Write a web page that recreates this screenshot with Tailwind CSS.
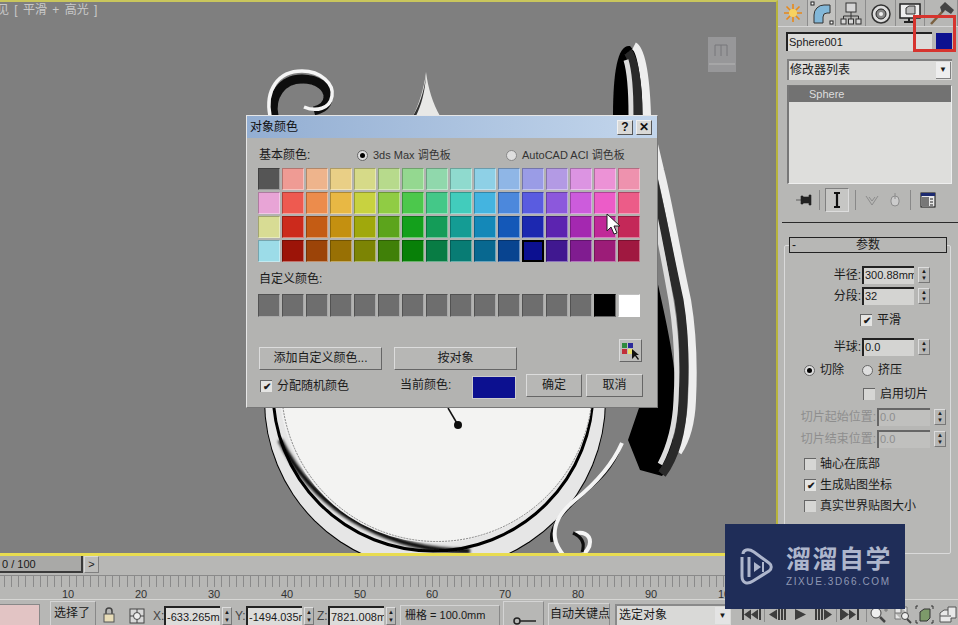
<!DOCTYPE html>
<html><head><meta charset="utf-8"><script src="https://cdn.jsdelivr.net/npm/@tailwindcss/browser@4"></script></head>
<body class="w-[958px] h-[625px] overflow-hidden bg-[#b7b7b5] text-[#1a1a1a] text-[12px] font-['Liberation_Sans','Noto_Sans_CJK_SC',sans-serif]">
<div class="relative flex w-[958px] h-[625px]">
  <div class="flex flex-col w-[778px] h-[625px]">
    <!-- viewport -->
    <div class="relative h-[556px] bg-[#7f7f7f] border-t-2 border-r-2 border-b-3 border-t-[#c9c65c] border-r-[#b8b43c] border-b-[#e8dc50] overflow-hidden">
      <div class="absolute -left-[3px] top-0 text-[12px] leading-[16px] text-[#c9c9c9] whitespace-pre [word-spacing:2px]">见 [ 平滑 + 高光 ]</div>
      <svg class="absolute left-0 top-[-2px]" width="776" height="556" viewBox="0 0 776 556">
        <defs><filter id="b"><feGaussianBlur stdDeviation="0.7"/></filter><filter id="c"><feGaussianBlur stdDeviation="1.5"/></filter></defs>
        <g filter="url(#b)">
          <!-- viewcube -->
          <rect x="708" y="37" width="28" height="35" fill="#979799"/>
          <path d="M715 56V45h6v11M721 45h6v11" stroke="#77777a" fill="none"/><path d="M709 64h26" stroke="#b5b5b5"/>
          <!-- spiral -->
          <path d="M274 116C270 96 282 79 302 79C318 79 328 87 328 97C328 105 322 109 314 111" fill="none" stroke="#0d0d0d" stroke-width="9"/>
          <path d="M270 116C265 90 278 71 302 71C321 71 334 84 332 96C330 109 316 112 304 107" fill="none" stroke="#f5f5f5" stroke-width="3.5"/>
          <!-- cone -->
          <path d="M426 72C424 90 418 106 413 116H440C433 104 428 88 426 72Z" fill="#e8e8e6"/>
          <path d="M426 76C424 92 419 106 413 116H416C421 106 425 92 426 76Z" fill="#333"/>
          <!-- right ornament -->
          <path d="M630 46C618 44 613 70 613 116H642V60Z" fill="#000"/>
          <path d="M657 280C668 330 680 380 675 420C672 450 672 465 662 476L640 470L628 440L640 405Z" fill="#000"/>
          <path d="M634 46C642 50 646 85 647 115L660 170C668 200 676 250 687 300C692 330 694 360 692 400C691 425 686 440 678 452" fill="none" stroke="#eeeeee" stroke-width="8"/>
          <path d="M628 52C634 60 638 85 638 115L651 170C660 205 669 255 679 300C684 330 685 365 683 400C682 430 676 455 662 474" fill="none" stroke="#2a2a2a" stroke-width="9"/>
          <path d="M626 60C629 70 631 90 631 115L645 170C653 205 663 255 671 300C676 330 678 365 676 400C675 425 670 445 660 464" fill="none" stroke="#dddddd" stroke-width="5"/>
          <!-- clock -->
          <circle cx="435" cy="400" r="171" fill="#000"/>
          <circle cx="435" cy="400" r="170" fill="#e6e6e6"/>
          <circle cx="433" cy="391" r="160" fill="none" stroke="#000" stroke-width="3" filter="url(#b)"/>
          <path d="M280 440C320 520 400 552 470 551" fill="none" stroke="#000" stroke-width="5" filter="url(#c)"/>
          <circle cx="436" cy="386" r="157" fill="#efefef"/>
          <circle cx="437" cy="386" r="155.500" fill="#f3f3f2" stroke="#444" stroke-width="0.6" stroke-dasharray="2 1"/>
          <path d="M448 408L458 425" stroke="#111" stroke-width="1.5"/><circle cx="458" cy="425" r="4" fill="#111"/>
          <!-- bottom curl -->
          <path d="M620 447C610 475 588 488 572 504C558 518 549 530 552 542" fill="none" stroke="#0a0a0a" stroke-width="3"/>
          <path d="M622 443C610 470 590 488 575 500C560 512 553 525 555 538C556 546 560 551 564 556" fill="none" stroke="#f4f4f4" stroke-width="4"/>
          <path d="M574 534C582 531 590 534 590 542C590 548 586 552 582 556" fill="none" stroke="#f4f4f4" stroke-width="4"/>
          <path d="M573 533C580 536 586 541 582 552" fill="none" stroke="#0a0a0a" stroke-width="3"/>
        </g>
      </svg>
    </div>
    <!-- timeline -->
    <div class="flex items-start h-[17px] pt-0">
      <div class="w-[83px] h-[17px] bg-[#a9a9a7] border-r-2 border-b-2 border-[#3a3a3a] pl-[2px] text-[11px] leading-[16px]">0 / 100</div>
      <div class="w-[15px] h-[17px] ml-[1px] bg-[#bdbdbb] border border-[#d8d8d8] border-b-[#808080] border-r-[#808080] text-center text-[11px] leading-[15px]">&gt;</div>
    </div>
    <div class="h-[26px] relative">
      <svg width="778" height="26" class="absolute left-0 top-0">
        <path d="M0 2.500H778" stroke="#8a8a8a"/>
        <path stroke="#8a8a8a" d="M4.500 2v12M11.500 2v12M18.500 2v12M25.500 2v12M33.500 2v12M40.500 2v12M47.500 2v12M54.500 2v12M61.500 2v12M69.500 2v12M76.500 2v12M83.500 2v12M90.500 2v12M98.500 2v12M105.500 2v12M112.500 2v12M119.500 2v12M127.500 2v12M134.500 2v12M141.500 2v12M149.500 2v12M156.500 2v12M163.500 2v12M170.500 2v12M178.500 2v12M185.500 2v12M192.500 2v12M199.500 2v12M207.500 2v12M214.500 2v12M221.500 2v12M229.500 2v12M236.500 2v12M243.500 2v12M250.500 2v12M258.500 2v12M265.500 2v12M272.500 2v12M279.500 2v12M287.500 2v12M294.500 2v12M301.500 2v12M309.500 2v12M316.500 2v12M323.500 2v12M330.500 2v12M338.500 2v12M345.500 2v12M352.500 2v12M359.500 2v12M367.500 2v12M374.500 2v12M381.500 2v12M389.500 2v12M396.500 2v12M403.500 2v12M410.500 2v12M418.500 2v12M425.500 2v12M432.500 2v12M439.500 2v12M447.500 2v12M454.500 2v12M461.500 2v12M469.500 2v12M476.500 2v12M483.500 2v12M490.500 2v12M498.500 2v12M505.500 2v12M512.500 2v12M519.500 2v12M527.500 2v12M534.500 2v12M541.500 2v12M549.500 2v12M556.500 2v12M563.500 2v12M570.500 2v12M578.500 2v12M585.500 2v12M592.500 2v12M599.500 2v12M607.500 2v12M614.500 2v12M621.500 2v12M629.500 2v12M636.500 2v12M643.500 2v12M650.500 2v12M658.500 2v12M665.500 2v12M672.500 2v12M679.500 2v12M687.500 2v12M694.500 2v12M701.500 2v12M709.500 2v12M716.500 2v12M723.500 2v12M730.500 2v12"/>
      </svg>
      <div class="absolute left-0 top-[14px] w-[778px] flex pl-[62px] text-[11px] leading-[14px] text-[#333]">
        <span class="w-[73px]">10</span><span class="w-[73px]">20</span><span class="w-[73px]">30</span><span class="w-[73px]">40</span><span class="w-[72px]">50</span><span class="w-[73px]">60</span><span class="w-[73px]">70</span><span class="w-[73px]">80</span><span class="w-[73px]">90</span><span>100</span>
      </div>
    </div>
    <!-- status -->
    <div class="flex items-end h-[26px] w-[958px] border-t border-[#d6d6d4]">
      <div class="w-[40px] h-[21px] bg-[#e2c4c4] border-t border-r border-[#888]"></div>
      <div class="w-[46px] h-[24px] ml-[10px] pl-[3px] border border-[#d4d4d4] border-r-[#888] border-b-0 text-[12px] leading-[23px] whitespace-nowrap">选择了</div>
      <svg class="ml-[5px] mb-[1px]" width="16" height="18" viewBox="0 0 16 18"><path d="M5 8V5a3 3 0 0 1 6 0v3" fill="none" stroke="#444" stroke-width="1.500"/><rect x="3" y="8" width="10" height="8" fill="#e8ddb8" stroke="#555"/></svg>
      <svg class="ml-[12px] mb-[1px]" width="16" height="16" viewBox="0 0 16 16"><rect x="1" y="1" width="14" height="14" fill="#d8d8d8" stroke="#444"/><circle cx="8" cy="8" r="3.500" fill="#eee" stroke="#444"/><path d="M8 1v3M8 12v3M1 8h3M12 8h3" stroke="#444"/></svg>
      <span class="ml-[8px] mb-[1px] w-[11px] text-[#444] leading-[16px]">X:</span>
      <div class="w-[56px] h-[19px] bg-[#dcdcda] border-t-2 border-l-2 border-[#222] text-[11px] leading-[18px] pl-[1px] overflow-hidden whitespace-nowrap">-633.265m</div>
      <div class="w-[10px] h-[18px] ml-[2px] border border-[#ddd] border-r-[#777] border-b-[#777] text-[6px] leading-[8px] text-center">▲<br>▼</div>
      <span class="ml-[3px] mb-[1px] w-[11px] text-[#444] leading-[16px]">Y:</span>
      <div class="w-[56px] h-[19px] bg-[#dcdcda] border-t-2 border-l-2 border-[#222] text-[11px] leading-[18px] pl-[1px] overflow-hidden whitespace-nowrap">-1494.035m</div>
      <div class="w-[10px] h-[18px] ml-[2px] border border-[#ddd] border-r-[#777] border-b-[#777] text-[6px] leading-[8px] text-center">▲<br>▼</div>
      <span class="ml-[3px] mb-[1px] w-[11px] text-[#444] leading-[16px]">Z:</span>
      <div class="w-[56px] h-[19px] bg-[#dcdcda] border-t-2 border-l-2 border-[#222] text-[11px] leading-[18px] pl-[1px] overflow-hidden whitespace-nowrap">7821.008m</div>
      <div class="w-[10px] h-[18px] ml-[2px] border border-[#ddd] border-r-[#777] border-b-[#777] text-[6px] leading-[8px] text-center">▲<br>▼</div>
      <div class="w-[100px] h-[20px] ml-[4px] pl-[4px] border border-[#d4d4d4] border-r-[#888] border-b-0 leading-[19px] whitespace-nowrap text-[11px]">栅格 = 100.0mm</div>
      <div class="relative w-[41px] h-[24px] ml-[3px] border border-[#d4d4d4] border-r-[#888] border-b-0"><svg class="absolute left-[8px] top-[14px]" width="26" height="10"><circle cx="5" cy="5" r="3" fill="none" stroke="#222" stroke-width="1.500"/><path d="M8 5h16" stroke="#222" stroke-width="1.500"/></svg></div>
      <div class="w-[62px] h-[22px] ml-[4px] pl-[1px] border border-[#d4d4d4] border-r-[#888] border-b-0 leading-[21px] whitespace-nowrap">自动关键点</div>
      <div class="relative w-[116px] h-[21px] ml-[5px] pl-[2px] bg-[#d9d9d7] leading-[19px] border-t-2 border-l-2 border-[#8a8a8a]">选定对象<span class="absolute right-[1px] top-[1px] w-[15px] h-[17px] bg-[#e4e4e4] text-[8px] leading-[17px] text-center">▼</span></div>
      <svg width="227" height="22" viewBox="0 0 227 22">
        <g fill="#3d3d3d">
          <path d="M11 6h2v11h-2zM28 6h2v11h-2zM13 11.500l7-5v10zM20 11.500l7-5v10z"/>
          <path d="M38 11.500l8-5v10zM47 6h2v11h-2zM50 6h2v11h-2zM53 6h2v11h-2z"/>
          <path d="M64 6l11 5.500-11 5.500z"/>
          <path d="M84 6h2v11h-2zM87 6h2v11h-2zM90 6h2v11h-2zM93 6l8 5.500-8 5.500z"/>
          <path d="M109 6h2v11h-2zM126 6h2v11h-2zM111 6.500l7 5-7 5zM118 6.500l7 5-7 5z"/>
        </g>
        <path d="M33.500 5v14M105.500 5v14M135.500 5v14" stroke="#8c8c8c"/>
        <g fill="none" stroke="#444">
          <circle cx="145" cy="10" r="5" fill="#eee"/><path d="M149 14l5 5" stroke-width="2.500"/><path d="M153 7h4M155 5v4" stroke="#777"/>
          <path d="M164 4h6v6h-6zM170 4h6v6M164 10v6h6" fill="#e6e6e6" stroke="#777"/><circle cx="174" cy="13" r="3.500" fill="#eee"/><path d="M176 16l4 4" stroke-width="2"/>
          <path d="M187 3h-2v3M200 3h2v3M187 20h-2v-3M200 20h2v-3" stroke="#333"/><path d="M189 9l4-3h6v9l-3 3h-7z" fill="#7d9a6a" stroke="#333"/>
          <path d="M209 10l4-3h4v-3h8v11h-5v4h-11z" fill="#e8e8e8" stroke="#555"/><path d="M217 7v5M209 13h11" stroke="#555"/>
        </g>
      </svg>
    </div>
  </div>

  <!-- command panel -->
  <div class="absolute right-0 top-0 w-[180px] h-[556px] bg-[#b7b7b5]">
    <div class="flex h-[27px] border-b border-[#d5d5d5] *:border-r *:border-r-[#8c8c8c] *:flex *:items-center *:justify-center">
      <div class="w-[30px]"><svg width="24" height="24" viewBox="0 0 24 24"><g stroke="#e8891a" stroke-width="1.600"><path d="M12 3v18M3 12h18M5.500 5.500l13 13M18.500 5.500l-13 13"/></g><circle cx="12" cy="12" r="4" fill="#f7d260"/></svg></div>
      <div class="w-[28px] bg-[#c2c2c0]"><svg width="24" height="24" viewBox="0 0 24 24"><path d="M4 22V14A10 10 0 0 1 14 4h6v8h-3a4 4 0 0 0-4 4v6z" fill="#82b7d8" stroke="#333"/><rect x="1" y="1" width="3" height="3" fill="#fff" stroke="#222"/><rect x="20" y="20" width="3" height="3" fill="#fff" stroke="#222"/></svg></div>
      <div class="w-[30px]"><svg width="24" height="24" viewBox="0 0 24 24" fill="#d6d6d6" stroke="#333"><rect x="7" y="2" width="10" height="9"/><rect x="2" y="18" width="5" height="5"/><rect x="9.500" y="18" width="5" height="5"/><rect x="17" y="18" width="5" height="5"/><path d="M12 11v7M4.500 18v-3h15v3" fill="none"/></svg></div>
      <div class="w-[30px]"><svg width="24" height="24" viewBox="0 0 24 24"><circle cx="12" cy="13" r="9" fill="#ddd" stroke="#333" stroke-width="1.500"/><circle cx="12" cy="13" r="5" fill="#888" stroke="#222"/><circle cx="12" cy="13" r="2" fill="#eee"/></svg></div>
      <div class="w-[29px]"><svg width="24" height="24" viewBox="0 0 24 24"><rect x="2" y="3" width="20" height="14" fill="#eee" stroke="#222" stroke-width="1.500"/><path d="M8 7l3-2h6v8H8z" fill="#bbb" stroke="#333"/><path d="M11 17v3M6 21h12" stroke="#222" stroke-width="2"/></svg></div>
      <div class="w-[33px] border-r-0"><svg width="28" height="26" viewBox="0 0 28 26"><path d="M4 24L17 10" stroke="#7a6040" stroke-width="2.500"/><path d="M13 7l5-5 9 8-3 4-6-4-3 3z" fill="#444"/></svg></div>
    </div>
    <div class="flex items-center mt-[5px] ml-[8px] gap-[4px]">
      <div class="w-[146px] h-[19px] bg-[#dcdcda] border-t-2 border-l-2 border-[#222] leading-[17px] pl-[1px] text-[11px]">Sphere001</div>
      <div class="w-[16px] h-[17px] bg-[#0d1190]"></div>
    </div>
    <div class="relative w-[165px] h-[21px] ml-[9px] mt-[8px] bg-[#dcdcda] border-t-2 border-l-2 border-[#808080] pl-[1px] leading-[18px] text-[12px]">修改器列表<span class="absolute right-[1px] top-[1px] w-[15px] h-[17px] bg-[#eeeeee] border-b border-r border-[#808080] text-[8px] leading-[16px] text-center">▼</span></div>
    <div class="w-[165px] h-[99px] ml-[9px] mt-[5px] bg-[#dededc] border-t border-l-2 border-[#777] border-b border-b-[#eee] border-r border-r-[#eee]">
      <div class="h-[16px] bg-[#727272] text-[#ddd] pl-[20px] leading-[17px] text-[11px]">Sphere</div>
    </div>
    <div class="flex items-center h-[24px] mt-[4px] ml-[17px]">
      <svg width="18" height="14" viewBox="0 0 18 14"><path d="M1 7h5M6 3h2v8H6zM8 4h6v6H8zM14 2h2v10h-2z" fill="#222" stroke="#222" stroke-width=".6"/></svg>
      <div class="w-px h-[20px] bg-[#888] ml-[6px]"></div>
      <div class="w-[24px] h-[24px] ml-[5px] border border-[#808080] border-r-[#ddd] border-b-[#ddd] flex justify-center items-center bg-[#c6c6c4]"><svg width="8" height="16"><path d="M1 1h6M1 15h6M4 1v14" stroke="#111" stroke-width="2.200"/></svg></div>
      <div class="w-px h-[20px] bg-[#888] ml-[6px]"></div>
      <svg class="ml-[9px]" width="14" height="14" viewBox="0 0 14 14"><path d="M1 3l6 9 6-9M4 4l3 4 3-4" fill="none" stroke="#8c8c8c"/></svg>
      <svg class="ml-[10px]" width="12" height="16" viewBox="0 0 12 16"><rect x="2" y="4" width="8" height="10" rx="4" fill="#ccc" stroke="#8c8c8c"/><path d="M6 1v6" stroke="#8c8c8c"/></svg>
      <div class="w-px h-[20px] bg-[#888] ml-[9px]"></div>
      <svg class="ml-[9px]" width="16" height="16" viewBox="0 0 16 16"><rect x="1" y="1" width="14" height="14" fill="#e8e8e8" stroke="#111"/><rect x="1" y="1" width="14" height="3" fill="#1c2a70"/><rect x="2" y="5" width="7" height="9" fill="#777"/><path d="M10 7h3M10 10h3M10 13h3" stroke="#222"/></svg>
    </div>
    <div class="h-px bg-[#2a2a2a] mt-[10px] ml-[4px]"></div>
    <!-- params -->
    <div class="relative ml-[6px] mt-[22px] w-[167px] h-[309px] border border-[#dadada] rounded-[2px]">
      <div class="absolute left-[4px] -top-[9px] w-[158px] h-[16px] bg-[#b7b7b5] border border-[#222] text-center leading-[14px]"><span class="absolute left-[2px] top-0">-</span>参数</div>
      <div class="relative pt-[19px] h-full">
        <div class="flex justify-end items-center h-[20px] pr-[20px]"><span class="mr-[1px]">半径:</span><div class="w-[52px] h-[18px] bg-[#d4d4d2] border-t-2 border-l-2 border-[#222] leading-[15px] pl-[1px] text-[11px] overflow-hidden whitespace-nowrap">300.88mm</div><div class="ml-[4px] w-[12px] h-[16px] border border-[#ddd] border-r-[#777] border-b-[#777] text-[6px] leading-[7px] text-center">▲<br>▼</div></div>
        <div class="flex justify-end items-center h-[20px] mt-[1px] pr-[20px]"><span class="mr-[1px]">分段:</span><div class="w-[52px] h-[18px] bg-[#d4d4d2] border-t-2 border-l-2 border-[#222] leading-[15px] pl-[1px] text-[11px]">32</div><div class="ml-[4px] w-[12px] h-[16px] border border-[#ddd] border-r-[#777] border-b-[#777] text-[6px] leading-[7px] text-center">▲<br>▼</div></div>
        <div class="flex items-center h-[20px] mt-[4px] pl-[75px] gap-[5px]"><div class="w-[12px] h-[12px] bg-[#e4e4e2] border-t border-l border-[#666] text-[10px] font-bold leading-[11px] text-center">✔</div><span>平滑</span></div>
        <div class="flex justify-end items-center h-[20px] mt-[7px] pr-[20px]"><span class="mr-[1px]">半球:</span><div class="w-[52px] h-[18px] bg-[#d4d4d2] border-t-2 border-l-2 border-[#222] leading-[15px] pl-[1px] text-[11px]">0.0</div><div class="ml-[4px] w-[12px] h-[16px] border border-[#ddd] border-r-[#777] border-b-[#777] text-[6px] leading-[7px] text-center">▲<br>▼</div></div>
        <div class="flex items-center h-[20px] mt-[3px] pl-[19px]"><div class="w-[11px] h-[11px] rounded-full bg-[#dedede] border border-[#666] flex items-center justify-center"><div class="w-[5px] h-[5px] rounded-full bg-black"></div></div><span class="ml-[5px]">切除</span><div class="ml-[18px] w-[11px] h-[11px] rounded-full bg-[#dedede] border border-[#666]"></div><span class="ml-[5px]">挤压</span></div>
        <div class="flex items-center h-[20px] mt-[4px] pl-[78px] gap-[5px]"><div class="w-[12px] h-[12px] bg-[#d6d6d4] border-t border-l border-[#666]"></div><span>启用切片</span></div>
        <div class="flex justify-end items-center h-[20px] mt-[3px] pr-[4px] text-[#8e8e8e]"><span class="mr-[1px]">切片起始位置:</span><div class="w-[53px] h-[18px] bg-[#c0c0be] border-t-2 border-l-2 border-[#666] leading-[15px] pl-[1px] text-[11px]">0.0</div><div class="ml-[4px] w-[12px] h-[16px] border border-[#ddd] border-r-[#777] border-b-[#777] text-[6px] leading-[7px] text-center text-[#222]">▲<br>▼</div></div>
        <div class="flex justify-end items-center h-[20px] mt-[2px] pr-[4px] text-[#8e8e8e]"><span class="mr-[1px]">切片结束位置:</span><div class="w-[53px] h-[18px] bg-[#c0c0be] border-t-2 border-l-2 border-[#666] leading-[15px] pl-[1px] text-[11px]">0.0</div><div class="ml-[4px] w-[12px] h-[16px] border border-[#ddd] border-r-[#777] border-b-[#777] text-[6px] leading-[7px] text-center text-[#222]">▲<br>▼</div></div>
        <div class="flex items-center h-[20px] mt-[5px] pl-[19px] gap-[4px]"><div class="w-[12px] h-[12px] bg-[#d6d6d4] border-t border-l border-[#666]"></div><span>轴心在底部</span></div>
        <div class="flex items-center h-[20px] mt-[1px] pl-[19px] gap-[4px]"><div class="w-[12px] h-[12px] bg-[#e4e4e2] border-t border-l border-[#666] text-[10px] font-bold leading-[11px] text-center">✔</div><span>生成贴图坐标</span></div>
        <div class="flex items-center h-[20px] mt-[1px] pl-[19px] gap-[4px]"><div class="w-[12px] h-[12px] bg-[#d6d6d4] border-t border-l border-[#666]"></div><span>真实世界贴图大小</span></div>
      </div>
    </div>
  </div>

  <!-- annotation -->
  <div class="absolute left-[913px] top-[15px] w-[43px] h-[37px] border-[3px] border-[#d6342e]"></div>

  <!-- dialog -->
  <div class="absolute left-[246px] top-[115px] w-[412px] h-[293px] bg-[#b3b3b1] border border-[#e6e6e6] border-r-[#777] border-b-[#777]">
    <div class="flex items-center justify-between h-[22px] pl-[3px] pr-[5px] bg-gradient-to-r from-[#93aed2] to-[#c3d6ec] text-[12px] text-[#101010]">
      <span>对象颜色</span>
      <div class="flex gap-[3px]">
        <div class="w-[16px] h-[15px] bg-[#d9d9d7] border border-[#f0f0f0] border-r-[#555] border-b-[#555] font-bold leading-[13px] text-center">?</div>
        <div class="w-[16px] h-[15px] bg-[#d9d9d7] border border-[#f0f0f0] border-r-[#555] border-b-[#555] font-bold leading-[13px] text-center">✕</div>
      </div>
    </div>
    <div class="flex items-center h-[16px] mt-[9px] pl-[12px]">
      <span class="w-[98px]">基本颜色:</span>
      <div class="w-[11px] h-[11px] rounded-full bg-[#dedede] border border-[#666] flex items-center justify-center"><div class="w-[5px] h-[5px] rounded-full bg-black"></div></div>
      <span class="ml-[5px] w-[133px] text-[#333] text-[11px]">3ds Max 调色板</span>
      <div class="w-[11px] h-[11px] rounded-full bg-[#dedede] border border-[#888]"></div>
      <span class="ml-[5px] text-[#333] text-[11px]">AutoCAD ACI 调色板</span>
    </div>
    <div class="grid grid-cols-[repeat(16,22px)] gap-[2px] mt-[5px] ml-[11px] [&>div]:border [&>div]:border-t-black/25 [&>div]:border-l-black/25 [&>div]:border-r-white/40 [&>div]:border-b-white/40">
      <div class="h-[22px] bg-[#555555]"></div><div class="h-[22px] bg-[#ef9b94]"></div><div class="h-[22px] bg-[#eeb48c]"></div><div class="h-[22px] bg-[#e9cf86]"></div><div class="h-[22px] bg-[#d6da88]"></div><div class="h-[22px] bg-[#b7da8c]"></div><div class="h-[22px] bg-[#94d890]"></div><div class="h-[22px] bg-[#90d8ac]"></div><div class="h-[22px] bg-[#8fdace]"></div><div class="h-[22px] bg-[#8ed0e6]"></div><div class="h-[22px] bg-[#8fb6e6]"></div><div class="h-[22px] bg-[#9a9ce6]"></div><div class="h-[22px] bg-[#b39ae4]"></div><div class="h-[22px] bg-[#dc94e2]"></div><div class="h-[22px] bg-[#ec92d6]"></div><div class="h-[22px] bg-[#ee92ae]"></div>
      <div class="h-[22px] bg-[#e8a4d6]"></div><div class="h-[22px] bg-[#ee5a50]"></div><div class="h-[22px] bg-[#ec8c4c]"></div><div class="h-[22px] bg-[#e8b844]"></div><div class="h-[22px] bg-[#c8d240]"></div><div class="h-[22px] bg-[#90cc44]"></div><div class="h-[22px] bg-[#4cc84c]"></div><div class="h-[22px] bg-[#44c888]"></div><div class="h-[22px] bg-[#42ccbc]"></div><div class="h-[22px] bg-[#44b4e0]"></div><div class="h-[22px] bg-[#4c88dc]"></div><div class="h-[22px] bg-[#5a5ce0]"></div><div class="h-[22px] bg-[#8c58dc]"></div><div class="h-[22px] bg-[#cc5cdc]"></div><div class="h-[22px] bg-[#ec5cc8]"></div><div class="h-[22px] bg-[#ec5c88]"></div>
      <div class="h-[22px] bg-[#d8dc94]"></div><div class="h-[22px] bg-[#cc2a1c]"></div><div class="h-[22px] bg-[#c45c14]"></div><div class="h-[22px] bg-[#c49010]"></div><div class="h-[22px] bg-[#a0a80c]"></div><div class="h-[22px] bg-[#5ca41c]"></div><div class="h-[22px] bg-[#14a01c]"></div><div class="h-[22px] bg-[#149c58]"></div><div class="h-[22px] bg-[#149c94]"></div><div class="h-[22px] bg-[#1488b8]"></div><div class="h-[22px] bg-[#1458b8]"></div><div class="h-[22px] bg-[#1c28b0]"></div><div class="h-[22px] bg-[#5c24b0]"></div><div class="h-[22px] bg-[#a428b0]"></div><div class="h-[22px] bg-[#c02898]"></div><div class="h-[22px] bg-[#c42858]"></div>
      <div class="h-[22px] bg-[#9cdce8]"></div><div class="h-[22px] bg-[#9c1408]"></div><div class="h-[22px] bg-[#9c4408]"></div><div class="h-[22px] bg-[#987004]"></div><div class="h-[22px] bg-[#7c8404]"></div><div class="h-[22px] bg-[#408008]"></div><div class="h-[22px] bg-[#088008]"></div><div class="h-[22px] bg-[#087c44]"></div><div class="h-[22px] bg-[#087c74]"></div><div class="h-[22px] bg-[#086890]"></div><div class="h-[22px] bg-[#084490]"></div><div class="h-[22px] bg-[#0c1090] outline-2 -outline-offset-2 outline-black"></div><div class="h-[22px] bg-[#401890]"></div><div class="h-[22px] bg-[#801c90]"></div><div class="h-[22px] bg-[#9c1c78]"></div><div class="h-[22px] bg-[#a01840]"></div>
    </div>
    <div class="h-[16px] mt-[9px] ml-[12px] leading-[16px]">自定义颜色:</div>
    <div class="grid grid-cols-[repeat(16,22px)] gap-[2px] mt-[7px] ml-[11px] [&>div]:border [&>div]:border-t-black/25 [&>div]:border-l-black/25 [&>div]:border-r-white/40 [&>div]:border-b-white/40">
      <div class="h-[23px] bg-[#6e6e6e]"></div><div class="h-[23px] bg-[#6e6e6e]"></div><div class="h-[23px] bg-[#6e6e6e]"></div><div class="h-[23px] bg-[#6e6e6e]"></div><div class="h-[23px] bg-[#6e6e6e]"></div><div class="h-[23px] bg-[#6e6e6e]"></div><div class="h-[23px] bg-[#6e6e6e]"></div><div class="h-[23px] bg-[#6e6e6e]"></div><div class="h-[23px] bg-[#6e6e6e]"></div><div class="h-[23px] bg-[#6e6e6e]"></div><div class="h-[23px] bg-[#6e6e6e]"></div><div class="h-[23px] bg-[#6e6e6e]"></div><div class="h-[23px] bg-[#6e6e6e]"></div><div class="h-[23px] bg-[#6e6e6e]"></div><div class="h-[23px] bg-black"></div><div class="h-[23px] bg-white"></div>
    </div>
    <div class="relative h-[23px] mt-[30px]">
      <div class="absolute left-[12px] top-0 w-[123px] h-[23px] bg-[#b7b7b5] border border-[#dcdcdc] border-r-[#666] border-b-[#666] text-center leading-[20px]">添加自定义颜色...</div>
      <div class="absolute left-[147px] top-0 w-[123px] h-[23px] bg-[#b7b7b5] border border-[#dcdcdc] border-r-[#666] border-b-[#666] text-center leading-[20px]">按对象</div>
      <div class="absolute left-[372px] -top-[8px] w-[23px] h-[23px] bg-[#bcbcba] border border-[#dcdcdc] border-r-[#666] border-b-[#666]">
        <svg width="21" height="21" viewBox="0 0 21 21"><rect x="2" y="3" width="5" height="5" fill="#2f8a3c"/><rect x="8" y="3" width="5" height="5" fill="#2b2a9a"/><rect x="2" y="9" width="5" height="5" fill="#c2303a"/><rect x="8" y="9" width="5" height="5" fill="#e8e070"/><path d="M12 9v10l3-3 3 4 1-1-3-4h3z" fill="#111"/></svg>
      </div>
    </div>
    <div class="flex items-start h-[24px] mt-[4px] pl-[13px]">
      <div class="mt-[6px] w-[12px] h-[12px] bg-[#e4e4e2] border-t border-l border-[#666] text-[10px] font-bold leading-[11px] text-center">✔</div>
      <span class="ml-[5px] w-[123px] mt-[4px] leading-[16px]">分配随机颜色</span>
      <span class="w-[72px] mt-[3px] leading-[16px]">当前颜色:</span>
      <div class="w-[44px] h-[23px] mt-[2px] bg-[#0c1090] border border-[#ccc]"></div>
      <div class="w-[56px] h-[23px] ml-[10px] bg-[#b7b7b5] border border-[#dcdcdc] border-r-[#666] border-b-[#666] text-center leading-[20px]">确定</div>
      <div class="w-[57px] h-[23px] ml-[4px] bg-[#b7b7b5] border border-[#dcdcdc] border-r-[#666] border-b-[#666] text-center leading-[20px]">取消</div>
    </div>
  </div>
  <!-- cursor -->
  <svg class="absolute left-[606px] top-[213px]" width="16" height="24" viewBox="0 0 16 24"><path d="M1 1v17l4-4 3 7 3-1-3-7h6z" fill="#fff" stroke="#222"/></svg>

  <!-- watermark -->
  <div class="absolute left-[725px] top-[524px] w-[180px] h-[85px] bg-[#1f2d58] flex items-center pl-[15px] gap-[13px]">
    <svg width="33" height="38" viewBox="0 0 33 38" fill="none" stroke="#aeb6cc" stroke-width="3"><path d="M2 9V28C2 35 7 37 13 33L29 23C32 21 32 17 29 15L14 4C8 0 3 2 3 6"/><path d="M9 9V29"/><path d="M14 14l7 5-7 5z" fill="#aeb6cc" stroke="none"/><path d="M23 14v10" stroke-width="2"/></svg>
    <div class="flex flex-col items-start">
      <div class="text-[#aeb6cc] text-[25px] font-bold leading-[28px] tracking-[1.500px] whitespace-nowrap">溜溜自学</div>
      <div class="text-[#8f98b4] text-[10px] leading-[13px] tracking-[1.600px] mt-[2px] font-['Liberation_Sans']">ZIXUE.3D66.COM</div>
    </div>
  </div>
</div>
</body></html>
